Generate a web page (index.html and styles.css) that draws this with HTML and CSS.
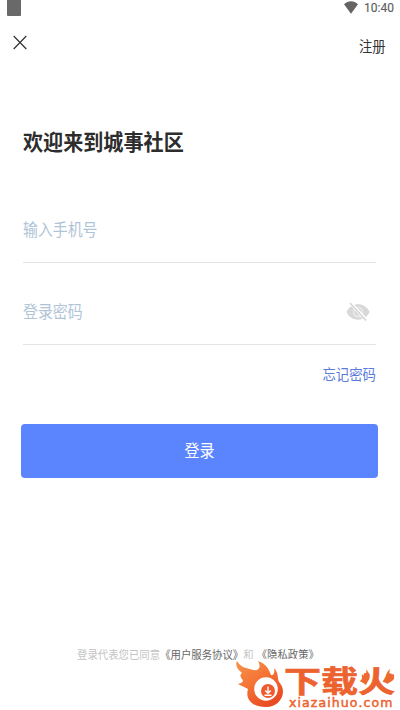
FILE: index.html
```html
<!DOCTYPE html>
<html lang="zh-CN">
<head>
<meta charset="utf-8">
<title>登录</title>
<link rel="stylesheet" href="styles.css">
</head>
<body>
<div class="screen">
  <header class="status">
    <span class="status-app"></span>
    <svg class="wifi" width="14" height="13" viewBox="0 0 14 13"><path d="M0 3.2C4-.7 10-.7 14 3.2L7 12.8Z" fill="#646464"/></svg>
    <span class="clock">10:40</span>
  </header>
  <nav class="nav">
    <svg class="close" width="14" height="15" viewBox="0 0 14 15"><path d="M.7 1 13.3 14M13.3 1 .7 14" stroke="#333" stroke-width="1.2" fill="none"/></svg>
    <a class="register"><span class="tall">注册</span></a>
  </nav>
  <h1 class="title"><span class="tall">欢迎来到城事社区</span></h1>
  <form class="form">
    <div class="field"><span class="tall">输入手机号</span></div>
    <div class="field"><span class="tall">登录密码</span>
      <svg class="eye" width="24" height="20" viewBox="0 0 24 20">
        <path d="M.5 10C5-.3 19-.3 23.500 10 19 20.300 5 20.300.5 10Z" fill="#d8d8d8"/>
        <circle cx="12" cy="10" r="4.500" fill="none" stroke="#ececec" stroke-width="1.400"/>
        <path d="M4 .5 21 19" stroke="#fff" stroke-width="3.400"/>
        <path d="M4 1 20 18.500" stroke="#d4d4d4" stroke-width="1.500"/>
      </svg>
    </div>
    <a class="forgot"><span class="tall">忘记密码</span></a>
    <div class="submit"><span class="tall">登录</span></div>
  </form>
  <footer class="terms"><span class="tall">登录代表您已同意<b>《用户服务协议》</b></span><span class="tall cut">和<b class="privacy">《隐私政策》</b></span></footer>
  <div class="watermark">
    <svg class="flame" width="50" height="52" viewBox="0 0 50 52">
      <defs><linearGradient id="fire" x1="0" y1="0" x2=".65" y2="1"><stop offset="0" stop-color="#f6934a"/><stop offset=".5" stop-color="#f47435"/><stop offset="1" stop-color="#e94a22"/></linearGradient></defs>
      <path d="M1 4C5 11 11 11 17 13 24 14 25 9 22 4 31 7 33 13 35 18 38 19 39 14 38 11 43 16 41 21 43 25 52 34 45 50 30 50 16 50 9 42 12 32 9 30 5 29 2 27 7 26 8 24 6 22 3 18 5 17 6 16 1 12-1 8 1 4Z" fill="url(#fire)"/>
      <circle cx="30" cy="32" r="11.800" fill="#fff"/>
      <circle cx="32" cy="34" r="7" fill="#f0592b"/>
      <path d="M32 29.500V35.500M29.200 33.500 32 36.200 34.800 33.500M28.500 38.200H35.500" fill="none" stroke="#fff" stroke-width="1.400"/>
    </svg>
    <div class="brand">下载火</div>
    <svg class="sparks" width="34" height="18" viewBox="0 0 34 18">
      <path d="M5 0C9 5 10 9 7 12L5 16 1 13C3 11 0 9 1 5L3 7C5 5 6 3 5 0ZM29 0C24 4 27 7 24 10L26 15 31 12C34 10 33 8 33 5L30 7C28 6 28 4 29 0Z" fill="#ed6b32"/>
    </svg>
    <div class="domain">xiazaihuo.com</div>
  </div>
</div>
</body>
</html>
```

FILE: styles.css
```css
* { box-sizing: border-box; }
body {
  margin: 0;
  background: #fff;
  font-family: "Noto Sans CJK SC", sans-serif;
}
.screen {
  position: relative;
  width: 400px;
  height: 710px;
  overflow: hidden;
}
.tall {
  display: inline-block;
  transform: scaleY(1.12);
}
.status {
  display: flex;
  height: 16px;
  padding: 0 6px 0 7px;
}
.status-app {
  width: 14px;
  height: 16px;
  margin-right: auto;
  border-radius: 0 0 1px 1px;
  background: #696969;
}
.wifi { margin: 1px 6px 0 0; }
.clock {
  color: #606060;
  font: 400 12px/16px Roboto, sans-serif;
  -webkit-text-stroke: .15px #606060;
  transform: scaleY(1.1);
  width: 30px;
  white-space: nowrap;
}
.nav {
  display: flex;
  justify-content: space-between;
  height: 62px;
  padding: 19px 14.5px 0 13px;
}
.register {
  height: 22px;
  color: #333;
  font-size: 13.3px;
  line-height: 22px;
}
.title {
  height: 32px;
  margin: 47px 23px 0;
  color: #2d2d2d;
  font-size: 20.1px;
  line-height: 31px;
  font-weight: 700;
}
.title .tall { transform: scaleY(1.07); }
.form { padding: 24px 24px 0 23px; }
.field {
  display: flex;
  justify-content: space-between;
  height: 82px;
  padding-top: 37px;
  border-bottom: 1px solid #e4e4e4;
  color: #b0c4d8;
  font-size: 14.9px;
  line-height: 24px;
}
.eye { margin: 2px 6px 0 0; }
.forgot {
  display: block;
  height: 24px;
  margin-top: 16px;
  color: #5b7cdb;
  font-size: 13.4px;
  line-height: 24px;
  text-align: right;
}
.submit {
  height: 53.5px;
  margin: 39px -2px 0;
  border-radius: 4px;
  background: #5b84ff;
  color: #fff;
  font-size: 15px;
  line-height: 51px;
  text-align: center;
}
.terms {
  display: flex;
  height: 20px;
  margin: 167.5px 0 0 77px;
  color: #c4c4c4;
  font-size: 10.4px;
  line-height: 20px;
  white-space: nowrap;
}
.terms b {
  color: #666;
  font-weight: 400;
}
.terms .privacy { margin-left: 3px; }
.cut {
  height: 13px;
  line-height: 18px;
  overflow: hidden;
}
.watermark {
  position: absolute;
  left: 236px;
  top: 657px;
  width: 164px;
  height: 53px;
}
.flame {
  position: absolute;
  left: 0;
  top: 0;
}
.brand {
  position: absolute;
  left: 48px;
  top: 3.5px;
  color: #ed6330;
  font-size: 37px;
  line-height: 37px;
  font-weight: 700;
  white-space: nowrap;
  transform: scaleY(.8);
  -webkit-text-stroke: .8px #ed6330;
}
.sparks {
  position: absolute;
  left: 125px;
  top: 12px;
}
.domain {
  position: absolute;
  left: 53px;
  top: 39px;
  color: #ed6330;
  font: 400 12.5px/13px "DejaVu Sans", sans-serif;
  -webkit-text-stroke: .5px #ed6330;
  letter-spacing: 1.1px;
}
```
